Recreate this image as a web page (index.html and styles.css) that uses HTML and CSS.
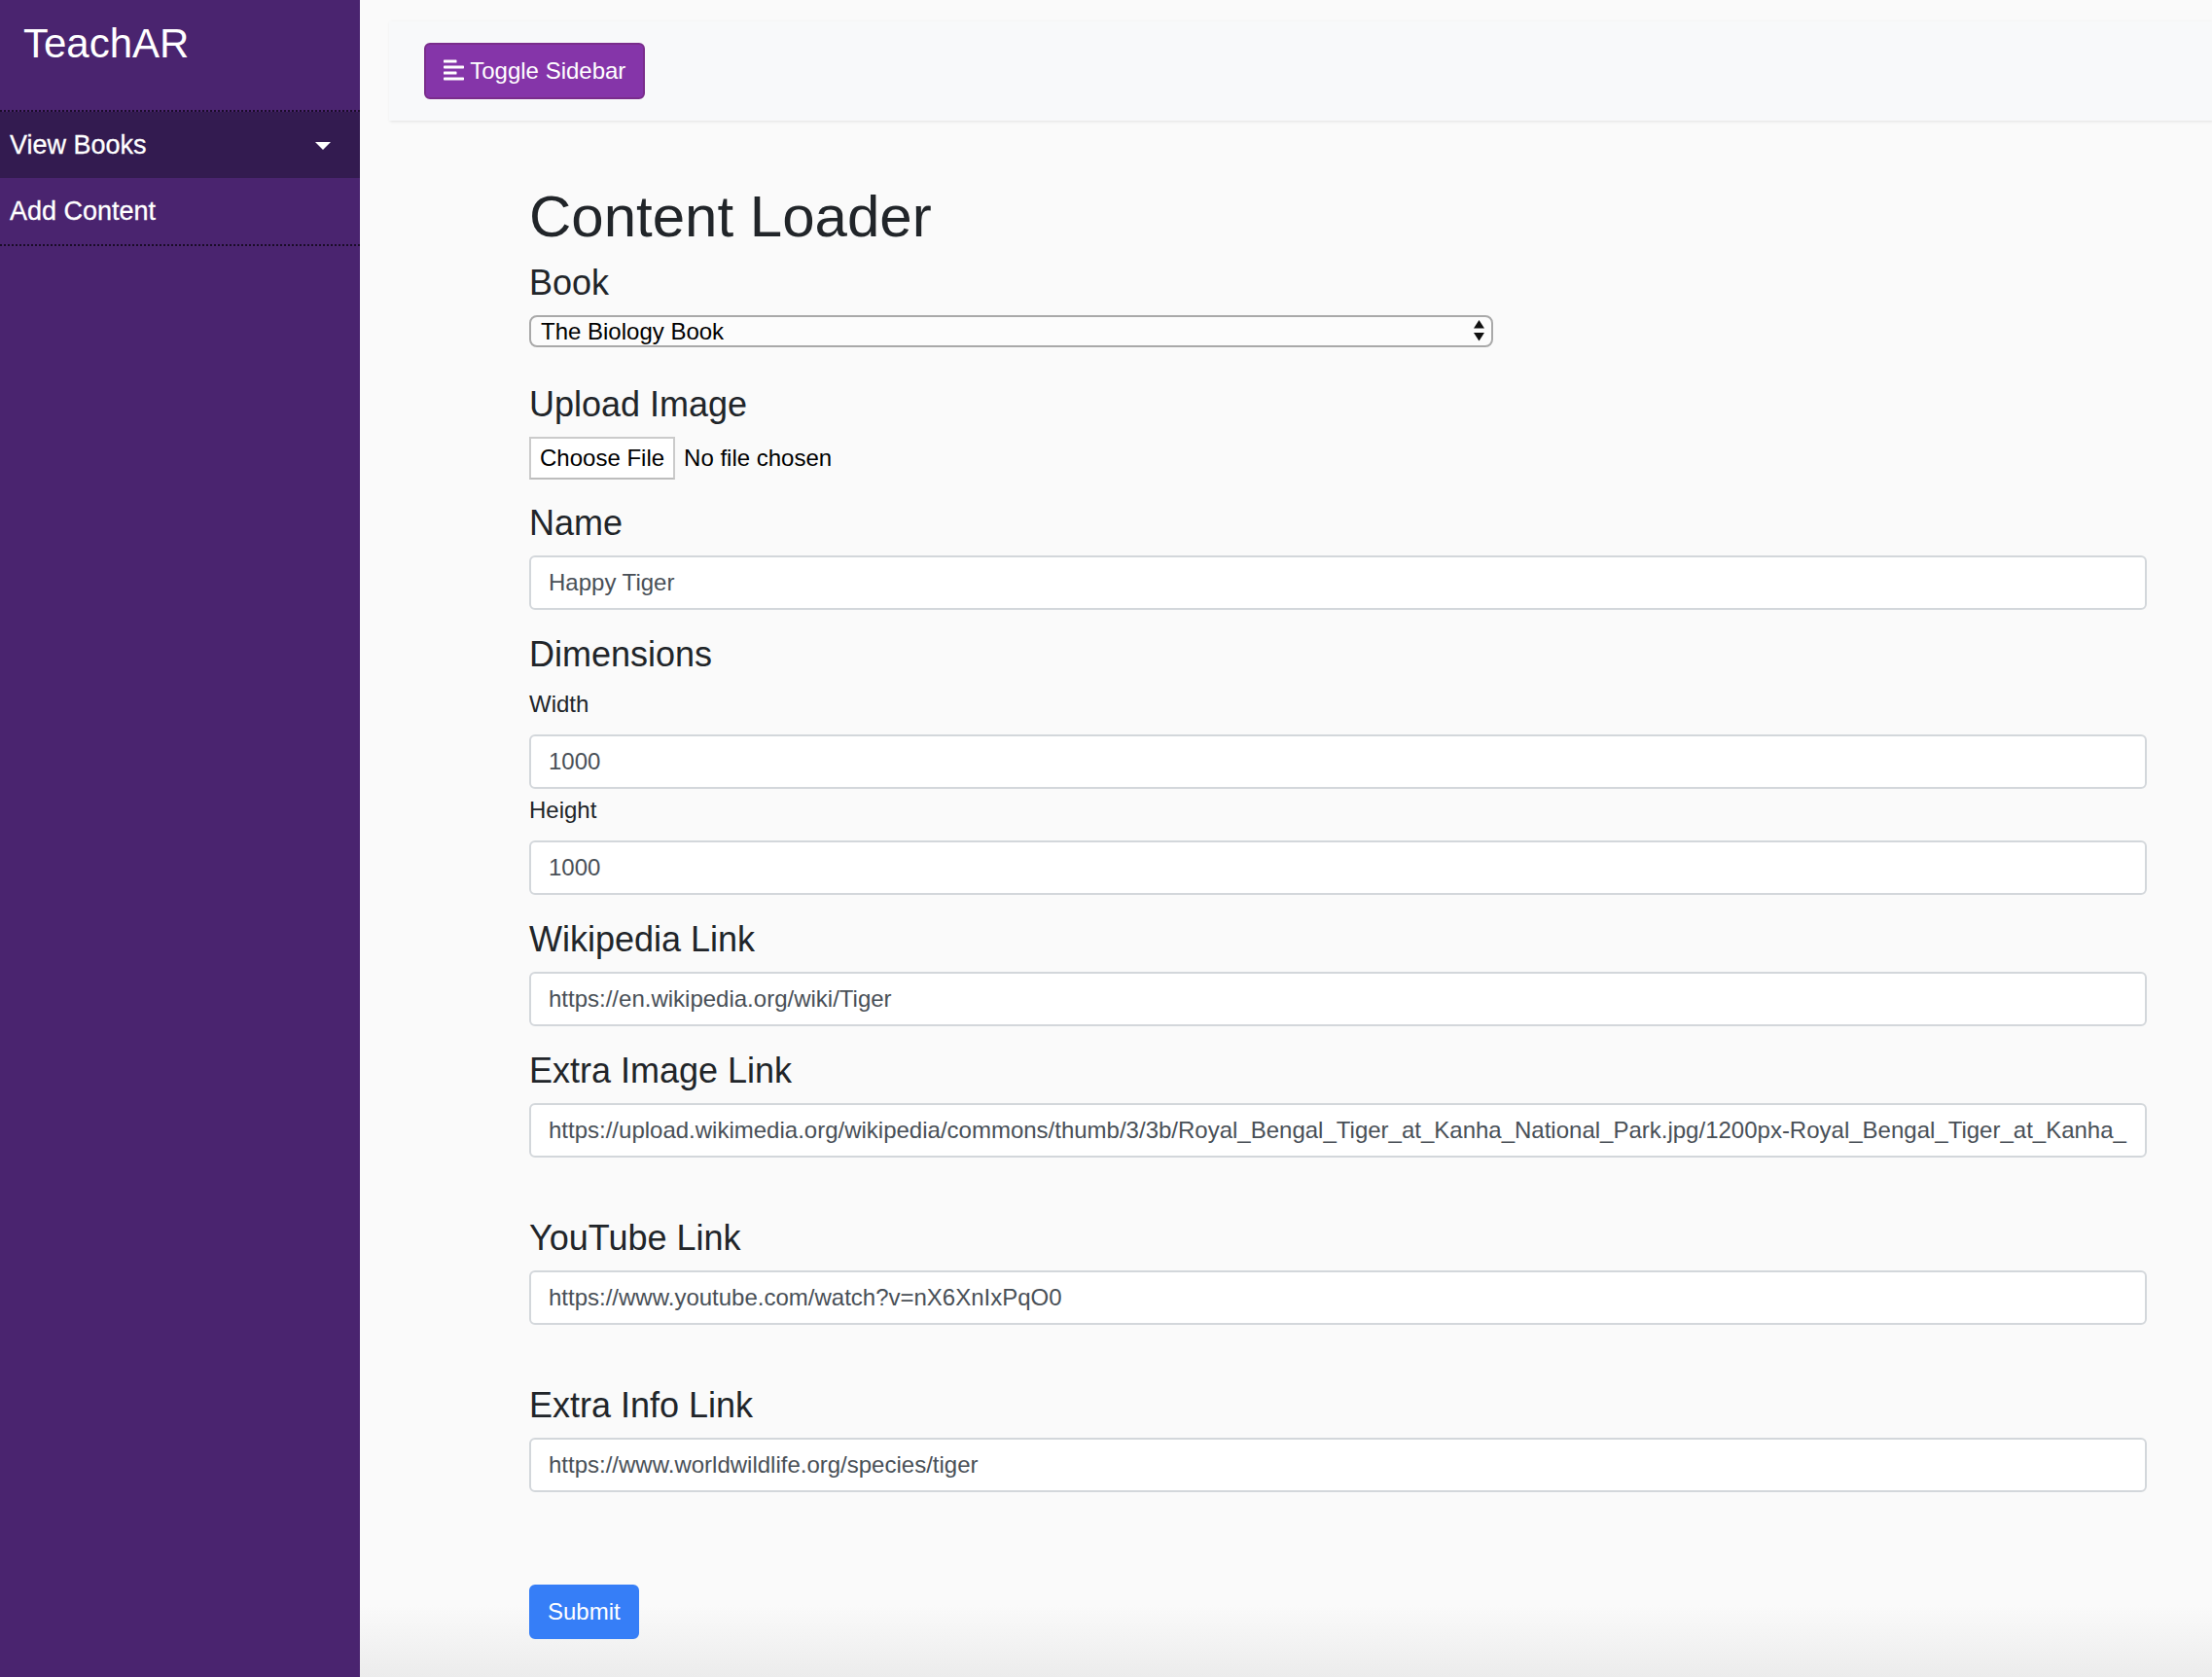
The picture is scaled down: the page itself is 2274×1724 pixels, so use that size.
FILE: index.html
```html
<!DOCTYPE html>
<html lang="en">
<head>
<meta charset="utf-8">
<title>TeachAR - Content Loader</title>
<link rel="stylesheet" href="styles.css">
</head>
<body>
<div class="wrapper">
  <nav class="sidebar">
    <div class="sidebar-header">
      <h3 class="brand">TeachAR</h3>
    </div>
    <ul class="menu">
      <li class="menu-item active"><a class="menu-link dropdown-toggle" href="#">View Books</a></li>
      <li class="menu-item"><a class="menu-link" href="#">Add Content</a></li>
    </ul>
  </nav>

  <div class="content">
    <div class="topbar">
      <button class="btn-toggle" type="button"><svg class="icon-align" viewBox="0 0 448 512" aria-hidden="true"><path fill="currentColor" d="M12.83 352h262.34A12.82 12.82 0 0 0 288 339.17v-38.34A12.82 12.82 0 0 0 275.17 288H12.830A12.82 12.82 0 0 0 0 300.83v38.34A12.82 12.82 0 0 0 12.83 352zm0-256h262.34A12.82 12.82 0 0 0 288 83.17V44.83A12.82 12.82 0 0 0 275.17 32H12.83A12.82 12.82 0 0 0 0 44.83v38.34A12.82 12.82 0 0 0 12.83 96zM432 160H16a16 16 0 0 0-16 16v32a16 16 0 0 0 16 16h416a16 16 0 0 0 16-16v-32a16 16 0 0 0-16-16zm0 256H16a16 16 0 0 0-16 16v32a16 16 0 0 0 16 16h416a16 16 0 0 0 16-16v-32a16 16 0 0 0-16-16z"/></svg> Toggle Sidebar</button>
    </div>

    <form class="loader">
      <h1 class="title">Content Loader</h1>

      <div class="group group-select">
        <h4 class="field-title">Book</h4>
        <div class="select-wrap">
          <select class="select">
            <option>The Biology Book</option>
          </select>
          <svg class="select-arrows" viewBox="0 0 11 22" aria-hidden="true"><polygon points="5.5,0 11,8.5 0,8.5"/><polygon points="0,13 11,13 5.5,21.5"/></svg>
        </div>
      </div>

      <div class="group group-file">
        <h4 class="field-title">Upload Image</h4>
        <div class="file-row">
          <span class="file-btn">Choose File</span>
          <span class="file-name">No file chosen</span>
        </div>
      </div>

      <div class="group">
        <h4 class="field-title">Name</h4>
        <input class="input" type="text" value="Happy Tiger">
      </div>

      <div class="group">
        <h4 class="field-title">Dimensions</h4>
        <label class="label">Width</label>
        <input class="input input-gap" type="text" value="1000">
        <label class="label">Height</label>
        <input class="input" type="text" value="1000">
      </div>

      <div class="group">
        <h4 class="field-title">Wikipedia Link</h4>
        <input class="input" type="text" value="https://en.wikipedia.org/wiki/Tiger">
      </div>

      <div class="group group-spaced">
        <h4 class="field-title">Extra Image Link</h4>
        <input class="input" type="text" value="https://upload.wikimedia.org/wikipedia/commons/thumb/3/3b/Royal_Bengal_Tiger_at_Kanha_National_Park.jpg/1200px-Royal_Bengal_Tiger_at_Kanha_National_Park.jpg">
      </div>

      <div class="group group-spaced">
        <h4 class="field-title">YouTube Link</h4>
        <input class="input" type="text" value="https://www.youtube.com/watch?v=nX6XnIxPqO0">
      </div>

      <div class="group group-last">
        <h4 class="field-title">Extra Info Link</h4>
        <input class="input" type="text" value="https://www.worldwildlife.org/species/tiger">
      </div>

      <button class="btn-submit" type="submit">Submit</button>
    </form>
  </div>
</div>
</body>
</html>
```

FILE: styles.css
```css
* {
  box-sizing: border-box;
}

html,
body {
  margin: 0;
  padding: 0;
}

body {
  font-family: "Liberation Sans", Arial, Helvetica, sans-serif;
  font-size: 24px;
  line-height: 1.5;
  color: #212529;
  background: #fafafa;
}

.wrapper {
  display: flex;
  min-height: 1724px;
}

/* ---------- Sidebar ---------- */
.sidebar {
  width: 370px;
  flex: none;
  background: #4a246f;
  color: #fff;
}

.sidebar-header {
  padding: 20px 24px 31px;
}

.brand {
  margin: 0 0 12px;
  font-size: 42px;
  line-height: 50px;
  font-weight: 400;
  color: #fff;
}

.menu {
  list-style: none;
  margin: 0;
  padding: 0;
  border-top: 2px dotted #1a0c29;
  border-bottom: 2px dotted #1a0c29;
}

.menu-link {
  position: relative;
  display: block;
  padding: 15px 10px;
  font-size: 27px;
  line-height: 38px;
  color: #fff;
  text-decoration: none;
  -webkit-text-stroke: 0.3px #fff;
}

.menu-item.active .menu-link {
  background: #331b50;
}

.dropdown-toggle::after {
  content: "";
  position: absolute;
  right: 30px;
  top: 50%;
  margin-top: -3px;
  border-top: 8px solid #fff;
  border-left: 8px solid transparent;
  border-right: 8px solid transparent;
}

/* ---------- Content ---------- */
.content {
  flex: 1;
  padding: 22px 0 0 30px;
  background: linear-gradient(to bottom, #fafafa 0, #fafafa 1650px, #ececec 1724px);
}

.topbar {
  background: #f8f9fa;
  padding: 22px 36px;
  box-shadow: 1px 1px 3px rgba(0, 0, 0, 0.1);
  margin-bottom: 63px;
}

.btn-toggle {
  display: inline-block;
  font-family: inherit;
  font-size: 24px;
  line-height: 36px;
  padding: 9px 18px;
  color: #fff;
  background: #8535a9;
  border: 2px solid #7a2d8c;
  border-radius: 6px;
  cursor: pointer;
}

.icon-align {
  width: 21px;
  height: 24px;
  vertical-align: -3px;
}

.loader {
  margin-left: 144px;
  width: 1663px;
}

.title {
  margin: 0 0 10px;
  font-size: 60px;
  line-height: 72px;
  font-weight: 400;
  color: #212529;
}

.field-title {
  margin: 0 0 12px;
  font-size: 36px;
  line-height: 43px;
  font-weight: 400;
  color: #212529;
}

.group {
  margin-bottom: 24px;
}

.group-select {
  margin-bottom: 37px;
}

.group-file {
  margin-bottom: 23px;
}

.group-spaced {
  margin-bottom: 61px;
}

.group-last {
  margin-bottom: 95px;
}

/* select */
.select-wrap {
  position: relative;
  width: 991px;
  height: 33px;
}

.select {
  -webkit-appearance: none;
  appearance: none;
  display: block;
  width: 100%;
  height: 33px;
  margin: 0;
  padding: 0 30px 0 10px;
  font-family: inherit;
  font-size: 24px;
  line-height: 29px;
  color: #000;
  background: #fcfcfc;
  border: 2px solid #a9a9a9;
  border-radius: 8px;
}

.select-arrows {
  position: absolute;
  left: 971px;
  top: 5px;
  width: 11px;
  height: 22px;
  fill: #111;
  pointer-events: none;
}

/* file input */
.file-row {
  display: flex;
  align-items: center;
  height: 44px;
}

.file-btn {
  display: inline-flex;
  align-items: center;
  height: 44px;
  padding: 0 9px;
  font-size: 24px;
  color: #000;
  background: #fff;
  border: 2px solid #cbcbcb;
  border-bottom-color: #bdbdbd;
}

.file-name {
  margin-left: 9px;
  color: #000;
}

/* text inputs */
.label {
  display: block;
  margin-bottom: 13px;
  font-size: 24px;
  line-height: 36px;
  color: #212529;
}

.input {
  display: block;
  width: 100%;
  height: 56px;
  margin: 0;
  padding: 8px 18px;
  font-family: inherit;
  font-size: 24px;
  line-height: 36px;
  color: #495057;
  background: #fff;
  border: 2px solid #d3d7db;
  border-radius: 6px;
}

.input-gap {
  margin-bottom: 4px;
}

.btn-submit {
  display: inline-block;
  height: 56px;
  padding: 0 17px;
  font-family: inherit;
  font-size: 24px;
  line-height: 36px;
  color: #fff;
  background: #367ef7;
  border: 2px solid #367ef7;
  border-radius: 6px;
  cursor: pointer;
}
```
